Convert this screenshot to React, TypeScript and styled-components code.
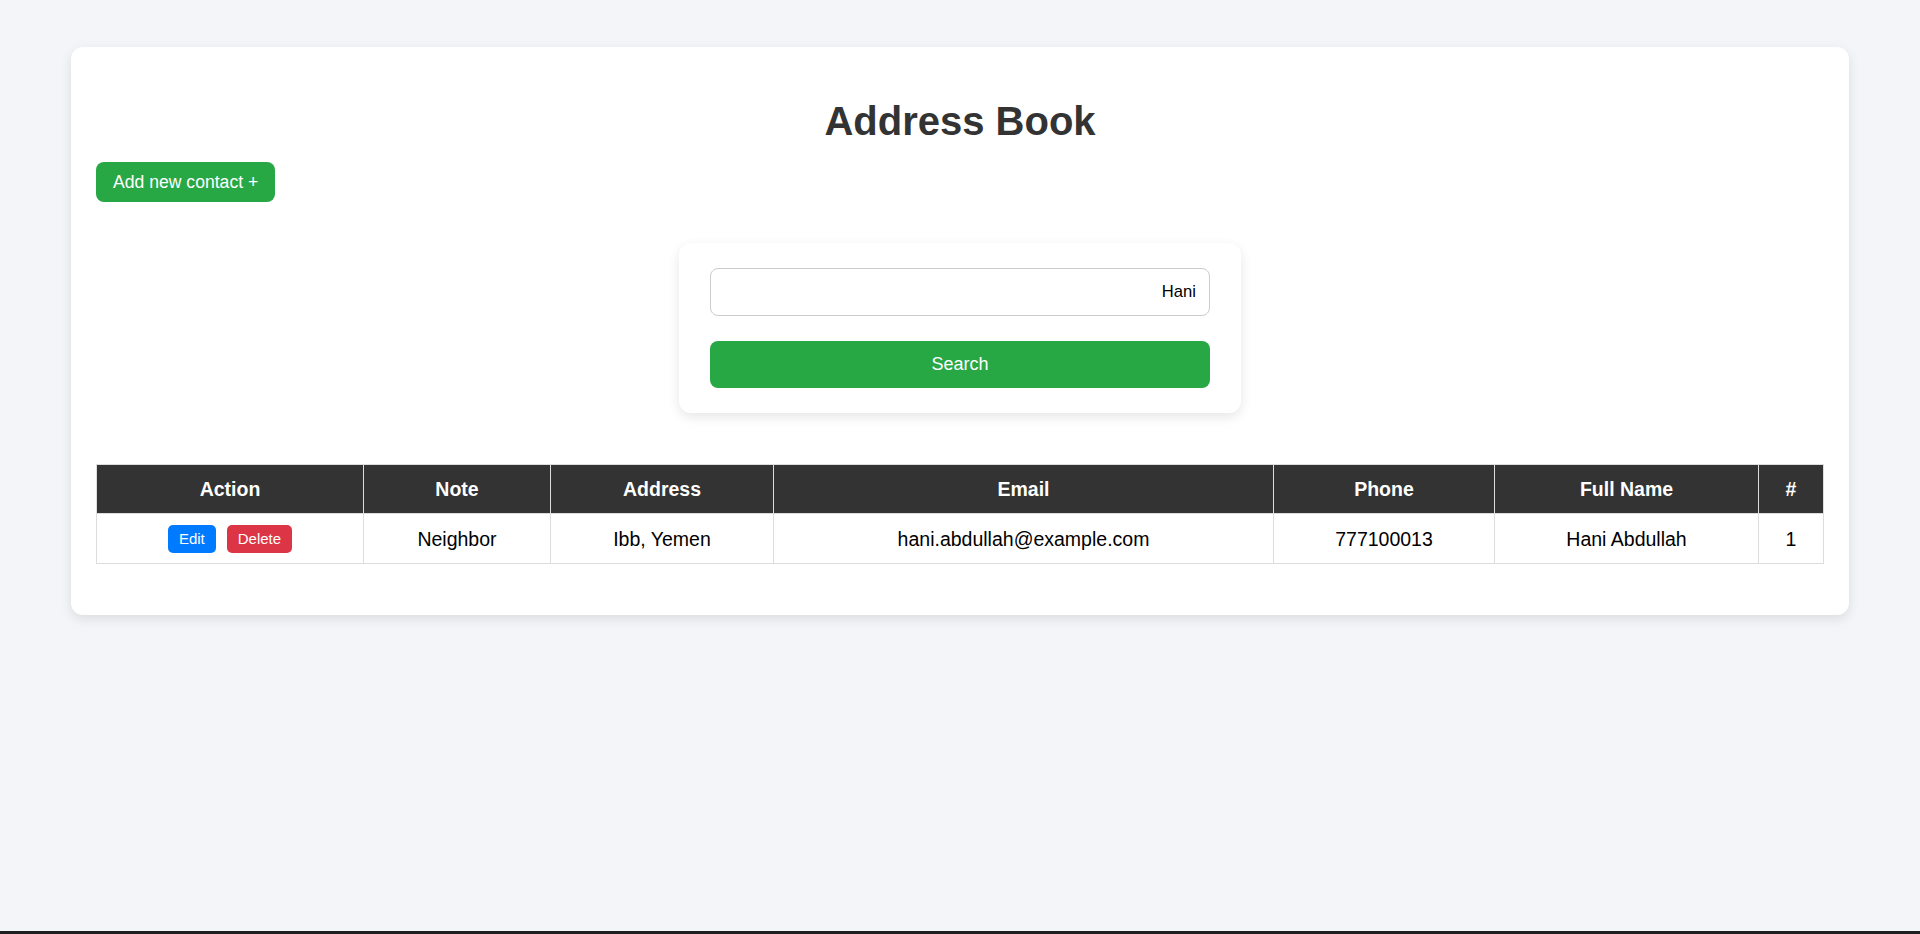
import React from "react";
import styled, { createGlobalStyle } from "styled-components";

const GlobalStyle = createGlobalStyle`
  html, body {
    margin: 0;
    padding: 0;
    background: #f4f5f9;
    font-family: "Liberation Sans", Arial, sans-serif;
  }
  * { box-sizing: border-box; }
`;

const Page = styled.div`
  min-height: 100vh;
  display: flex;
  flex-direction: column;
`;

const Main = styled.main`
  flex: 1;
  padding: 47px 71px 0;
`;

const TaskStrip = styled.div`
  height: 3px;
  background: #1f1f1f;
`;

const Card = styled.section`
  background: #fff;
  border-radius: 12px;
  box-shadow: 0 4px 12px rgba(0, 0, 0, 0.1);
  padding: 25px;
`;

const Title = styled.h1`
  margin: 27px 0 18px;
  text-align: center;
  font-size: 40px;
  font-weight: 700;
  color: #333;
  line-height: normal;
`;

const Button = styled.button<{ $bg: string }>`
  background: ${(p) => p.$bg};
  color: #fff;
  border: none;
  font-family: inherit;
  cursor: pointer;
`;

const AddButton = styled(Button)`
  font-size: 17.6px;
  line-height: 20px;
  padding: 10px 17px;
  border-radius: 8px;
`;

const SearchCard = styled.div`
  width: 562px;
  margin: 41px auto 0;
  background: #fff;
  border-radius: 12px;
  box-shadow: 0 4px 12px rgba(0, 0, 0, 0.1);
  padding: 25px 31px 25px;
  display: flex;
  flex-direction: column;
  gap: 25px;
`;

const SearchInput = styled.input`
  width: 100%;
  height: 48px;
  border: 1px solid #ccc;
  border-radius: 8px;
  padding: 0 13px;
  font-family: inherit;
  font-size: 16.6px;
  color: #000;
  text-align: right;
  direction: rtl;
  outline: none;
  box-shadow: none;
  appearance: none;
`;

const SearchButton = styled(Button)`
  width: 100%;
  height: 47px;
  border-radius: 8px;
  font-size: 18px;
`;

const Table = styled.table`
  width: 100%;
  margin: 51px 0 26px;
  border-collapse: collapse;
  table-layout: fixed;
  font-size: 19.5px;
`;

const Col = styled.col<{ $w: number }>`
  width: ${(p) => p.$w}px;
`;

const Th = styled.th`
  background: #333;
  color: #fff;
  font-weight: 700;
  border: 1px solid #ddd;
  padding: 13px 10px;
  text-align: center;
  line-height: 22px;
`;

const Td = styled.td`
  border: 1px solid #ddd;
  padding: 11px 10px 10px;
  text-align: center;
  color: #000;
  line-height: 22px;
  vertical-align: middle;
`;

const ActionWrap = styled.div`
  display: flex;
  justify-content: center;
  gap: 11px;
`;

const SmallButton = styled(Button)`
  font-size: 15px;
  line-height: 18px;
  padding: 5px 11px;
  border-radius: 5px;
`;

const columns: { label: string; w: number }[] = [
  { label: "Action", w: 267 },
  { label: "Note", w: 187 },
  { label: "Address", w: 223 },
  { label: "Email", w: 500 },
  { label: "Phone", w: 221 },
  { label: "Full Name", w: 264 },
  { label: "#", w: 65 },
];

const rows = [
  {
    note: "Neighbor",
    address: "Ibb, Yemen",
    email: "hani.abdullah@example.com",
    phone: "777100013",
    name: "Hani Abdullah",
    id: 1,
  },
];

export default function App() {
  return (
    <>
      <GlobalStyle />
      <Page>
        <Main>
          <Card>
            <Title>Address Book</Title>
            <AddButton $bg="#28a745">Add new contact +</AddButton>
            <SearchCard>
              <SearchInput defaultValue="Hani" />
              <SearchButton $bg="#28a745">Search</SearchButton>
            </SearchCard>
            <Table>
              <colgroup>
                {columns.map((c) => (
                  <Col key={c.label} $w={c.w} />
                ))}
              </colgroup>
              <thead>
                <tr>
                  {columns.map((c) => (
                    <Th key={c.label}>{c.label}</Th>
                  ))}
                </tr>
              </thead>
              <tbody>
                {rows.map((r) => (
                  <tr key={r.id}>
                    <Td>
                      <ActionWrap>
                        <SmallButton $bg="#007bff">Edit</SmallButton>
                        <SmallButton $bg="#dc3545">Delete</SmallButton>
                      </ActionWrap>
                    </Td>
                    <Td>{r.note}</Td>
                    <Td>{r.address}</Td>
                    <Td>{r.email}</Td>
                    <Td>{r.phone}</Td>
                    <Td>{r.name}</Td>
                    <Td>{r.id}</Td>
                  </tr>
                ))}
              </tbody>
            </Table>
          </Card>
        </Main>
        <TaskStrip />
      </Page>
    </>
  );
}
